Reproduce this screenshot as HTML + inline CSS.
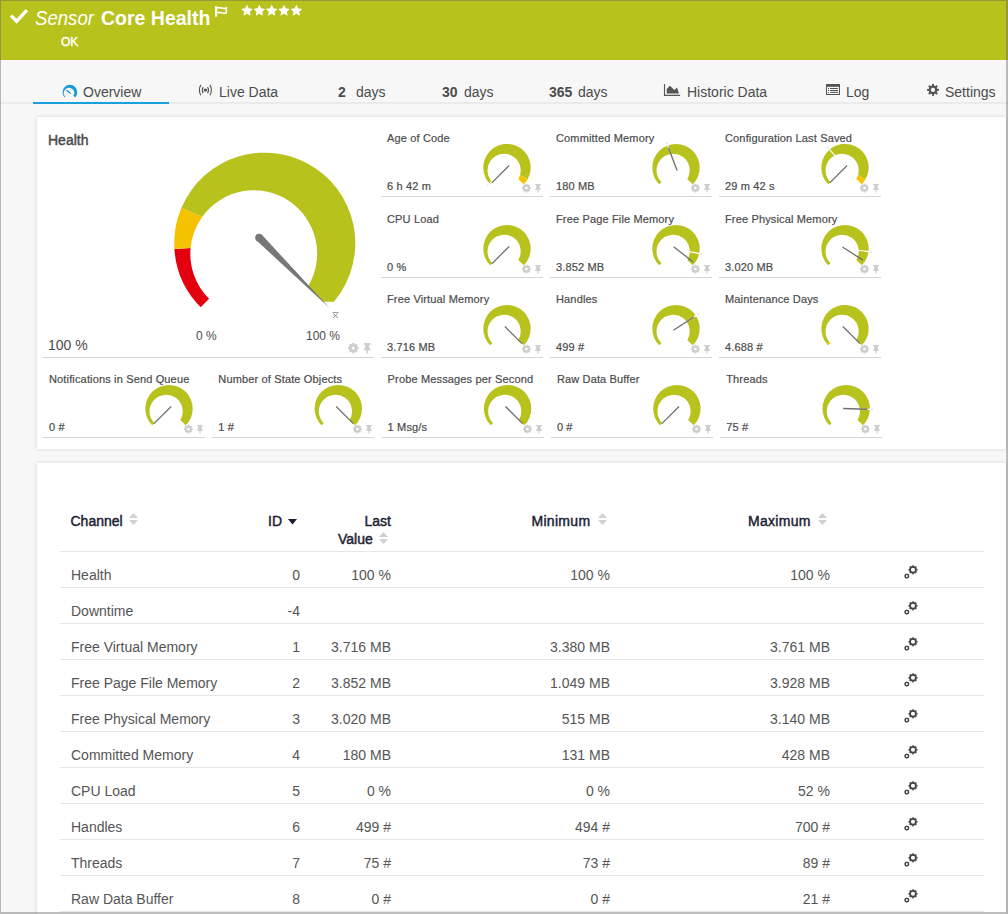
<!DOCTYPE html>
<html><head><meta charset="utf-8"><style>
*{box-sizing:border-box}
html,body{margin:0;padding:0}
body{width:1008px;height:914px;overflow:hidden;position:relative;background:#f7f7f7;font-family:"Liberation Sans",sans-serif;color:#4b4b4b}
.abs{position:absolute}
#hdr{position:absolute;left:0;top:0;width:1008px;height:60px;background:#b7c21c}
#frame{position:absolute;left:0;top:0;width:1008px;height:914px;border-top:1px solid rgba(100,100,100,.42);border-left:1px solid rgba(100,100,100,.42);border-right:2px solid rgba(100,100,100,.42);border-bottom:2px solid rgba(100,100,100,.42);z-index:50;pointer-events:none}
.tab{position:absolute;top:84px;font-size:14px;line-height:16px;color:#4b4b4b;white-space:nowrap}
.tab b{font-weight:bold}
.panel{position:absolute;left:37px;width:969px;background:#fff;box-shadow:0 0 4px rgba(0,0,0,.14)}
.wt{position:absolute;font-size:11px;line-height:12px;letter-spacing:.15px;color:#4b4b4b;-webkit-text-stroke:.2px #4b4b4b;white-space:nowrap}
.wv{position:absolute;font-size:11px;line-height:12px;letter-spacing:.15px;color:#4b4b4b;-webkit-text-stroke:.2px #4b4b4b;white-space:nowrap}
.ul{position:absolute;height:1px;background:#d6d6d6}
.gp{position:absolute}
.tc{position:absolute;font-size:14px;line-height:14px;color:#555;white-space:nowrap}
.th{position:absolute;font-size:14px;line-height:18px;color:#1d1d33;-webkit-text-stroke:.45px #1d1d33;white-space:nowrap}
.tl{position:absolute;left:60px;width:924px;height:1px;background:#e6e6e6}
.act{position:absolute}
.sort{position:absolute}
</style></head><body>
<div id="hdr"></div>
<svg class="abs" style="left:9px;top:8px" width="20" height="16" viewBox="0 0 20 16"><path d="M2 7.6L7.6 13.2L18 2.2" fill="none" stroke="#fff" stroke-width="3.4"/></svg>
<div class="abs" style="left:35px;top:7px;font-size:20px;line-height:22px;color:#fff;font-style:italic;transform:scaleX(.93);transform-origin:0 0;white-space:nowrap">Sensor</div>
<div class="abs" style="left:101px;top:6.5px;font-size:19.5px;line-height:22px;color:#fff;font-weight:bold;white-space:nowrap">Core Health</div>
<svg class="abs" style="left:214px;top:5px" width="16" height="13" viewBox="0 0 16 13"><path d="M2.1 1.2V11.7" stroke="#fff" stroke-width="2.1"/><path d="M2.5 3C5.5 1.4 9 4.6 12.3 3V7.8C9 9.4 5.5 6.2 2.5 7.8" fill="none" stroke="#fff" stroke-width="1.6"/></svg>
<svg class="abs" style="left:241px;top:4px" width="64" height="13" viewBox="0 0 64 13"><g fill="#fff"><path transform="translate(6.00 6.8)" d="M0.00 -6.10L1.76 -2.43L5.80 -1.89L2.85 0.93L3.59 4.94L0.00 3.00L-3.59 4.94L-2.85 0.93L-5.80 -1.89L-1.76 -2.43z"/><path transform="translate(18.35 6.8)" d="M0.00 -6.10L1.76 -2.43L5.80 -1.89L2.85 0.93L3.59 4.94L0.00 3.00L-3.59 4.94L-2.85 0.93L-5.80 -1.89L-1.76 -2.43z"/><path transform="translate(30.70 6.8)" d="M0.00 -6.10L1.76 -2.43L5.80 -1.89L2.85 0.93L3.59 4.94L0.00 3.00L-3.59 4.94L-2.85 0.93L-5.80 -1.89L-1.76 -2.43z"/><path transform="translate(43.05 6.8)" d="M0.00 -6.10L1.76 -2.43L5.80 -1.89L2.85 0.93L3.59 4.94L0.00 3.00L-3.59 4.94L-2.85 0.93L-5.80 -1.89L-1.76 -2.43z"/><path transform="translate(55.40 6.8)" d="M0.00 -6.10L1.76 -2.43L5.80 -1.89L2.85 0.93L3.59 4.94L0.00 3.00L-3.59 4.94L-2.85 0.93L-5.80 -1.89L-1.76 -2.43z"/></g></svg>
<div class="abs" style="left:61px;top:35px;font-size:12px;line-height:14px;color:#fff;-webkit-text-stroke:.4px #fff;white-space:nowrap">OK</div>

<div class="abs" style="left:0;top:102px;width:1008px;height:2px;background:#ebebeb"></div>
<div class="abs" style="left:33px;top:102px;width:136px;height:2px;background:#1ca0dc"></div>
<svg class="abs" style="left:0;top:0" width="100" height="110"><path d="M64.67 97.43A7.4 7.4 0 1 1 75.13 97.43L73.44 95.74A5.18 5.18 0 1 0 65.35 96.75Z" fill="#1a9ad6"/><line x1="66.4" y1="90.3" x2="70.8" y2="93.5" stroke="#1a9ad6" stroke-width="1.3"/></svg>
<div class="tab" style="left:83px">Overview</div>
<svg class="abs" style="left:197px;top:84px" width="17" height="13" viewBox="0 0 17 13"><circle cx="8.4" cy="6.1" r="1.7" fill="#555"/><path d="M6.2 2.9A6.4 6.4 0 0 0 6.2 9.3M10.6 2.9A6.4 6.4 0 0 1 10.6 9.3M3.9 0.9A10.3 10.3 0 0 0 3.9 11.3M12.9 0.9A10.3 10.3 0 0 1 12.9 11.3" fill="none" stroke="#555" stroke-width="1.1"/></svg>
<div class="tab" style="left:219px">Live Data</div>
<div class="tab" style="left:338px"><b>2</b></div><div class="tab" style="left:356px">days</div>
<div class="tab" style="left:442px"><b>30</b></div><div class="tab" style="left:464px">days</div>
<div class="tab" style="left:549px"><b>365</b></div><div class="tab" style="left:578px">days</div>
<svg class="abs" style="left:663px;top:84px" width="18" height="12" viewBox="0 0 18 12"><path d="M1.5 0V11.4H17.1" fill="none" stroke="#555" stroke-width="1.1"/><path d="M3.7 9.6V5L6.9 1.7L11.4 5.9L14.1 3.4L15.9 9.6z" fill="#555"/></svg>
<div class="tab" style="left:687px">Historic Data</div>
<svg class="abs" style="left:826px;top:84px" width="14" height="11" viewBox="0 0 14 11"><rect x="0.5" y="0.5" width="13" height="10" fill="none" stroke="#555" stroke-width="1"/><rect x="0" y="0" width="14" height="2.8" fill="#555"/><path d="M2 4.5H3M4.1 4.5H12M2 6.5H3M4.1 6.5H12M2 8.4H3M4.1 8.4H12" stroke="#555" stroke-width="1"/></svg>
<div class="tab" style="left:846px">Log</div>
<svg class="abs" style="left:926px;top:83px" width="14" height="14" viewBox="0 0 14 14"><g fill="#555"><rect x="6" y="1" width="2" height="2.6" transform="rotate(0 7 6.9)"/><rect x="6" y="1" width="2" height="2.6" transform="rotate(45 7 6.9)"/><rect x="6" y="1" width="2" height="2.6" transform="rotate(90 7 6.9)"/><rect x="6" y="1" width="2" height="2.6" transform="rotate(135 7 6.9)"/><rect x="6" y="1" width="2" height="2.6" transform="rotate(180 7 6.9)"/><rect x="6" y="1" width="2" height="2.6" transform="rotate(225 7 6.9)"/><rect x="6" y="1" width="2" height="2.6" transform="rotate(270 7 6.9)"/><rect x="6" y="1" width="2" height="2.6" transform="rotate(315 7 6.9)"/><circle cx="7" cy="6.9" r="4.3"/></g><circle cx="7" cy="6.9" r="2.1" fill="#f7f7f7"/></svg>
<div class="tab" style="left:945px">Settings</div>

<div class="panel" style="top:117px;height:332px"></div>
<div class="panel" style="top:463px;height:460px"></div>

<div class="abs" style="left:48px;top:132px;font-size:14px;line-height:16px;color:#4b4b4b;-webkit-text-stroke:.45px #4b4b4b">Health</div>
<div class="abs" style="left:48px;top:337px;font-size:14px;line-height:16px;color:#4b4b4b">100 %</div>
<div class="abs" style="left:196px;top:329px;font-size:12px;line-height:14px;color:#4b4b4b">0 %</div>
<div class="abs" style="left:306px;top:329px;font-size:12px;line-height:14px;color:#4b4b4b">100 %</div>
<svg class="abs" style="left:331px;top:311px" width="9" height="8" viewBox="0 0 9 8"><path d="M1.5 1.3H7.5M2.2 2.6L6.8 6.8M6.8 2.6L2.2 6.8" stroke="#7a7a86" stroke-width="0.9"/></svg>
<div class="wt" style="left:387px;top:132px">Age of Code</div><div class="wv" style="left:387px;top:180px">6 h 42 m</div><div class="ul" style="left:381px;top:196px;width:162px"></div><svg class="gp" style="left:522px;top:183px" width="22" height="10" viewBox="0 0 22 10"><g fill="#cdcdcd"><circle cx="4.4" cy="5.1" r="3.5"/><rect x="3.5" y="0.7" width="1.8" height="1.6" transform="rotate(0 4.4 5.1)"/><rect x="3.5" y="0.7" width="1.8" height="1.6" transform="rotate(45 4.4 5.1)"/><rect x="3.5" y="0.7" width="1.8" height="1.6" transform="rotate(90 4.4 5.1)"/><rect x="3.5" y="0.7" width="1.8" height="1.6" transform="rotate(135 4.4 5.1)"/><rect x="3.5" y="0.7" width="1.8" height="1.6" transform="rotate(180 4.4 5.1)"/><rect x="3.5" y="0.7" width="1.8" height="1.6" transform="rotate(225 4.4 5.1)"/><rect x="3.5" y="0.7" width="1.8" height="1.6" transform="rotate(270 4.4 5.1)"/><rect x="3.5" y="0.7" width="1.8" height="1.6" transform="rotate(315 4.4 5.1)"/></g><circle cx="4.4" cy="5.1" r="1.3" fill="#fff"/><path d="M13.2 0.9H18.8V2.2H17.7V4.6L19.2 6.8H12.6L14.3 4.6V2.2H13.2z M15.4 6.8H16.6V9.6H15.4z" fill="#cdcdcd"/></svg><div class="wt" style="left:556px;top:132px">Committed Memory</div><div class="wv" style="left:556px;top:180px">180 MB</div><div class="ul" style="left:550px;top:196px;width:162px"></div><svg class="gp" style="left:691px;top:183px" width="22" height="10" viewBox="0 0 22 10"><g fill="#cdcdcd"><circle cx="4.4" cy="5.1" r="3.5"/><rect x="3.5" y="0.7" width="1.8" height="1.6" transform="rotate(0 4.4 5.1)"/><rect x="3.5" y="0.7" width="1.8" height="1.6" transform="rotate(45 4.4 5.1)"/><rect x="3.5" y="0.7" width="1.8" height="1.6" transform="rotate(90 4.4 5.1)"/><rect x="3.5" y="0.7" width="1.8" height="1.6" transform="rotate(135 4.4 5.1)"/><rect x="3.5" y="0.7" width="1.8" height="1.6" transform="rotate(180 4.4 5.1)"/><rect x="3.5" y="0.7" width="1.8" height="1.6" transform="rotate(225 4.4 5.1)"/><rect x="3.5" y="0.7" width="1.8" height="1.6" transform="rotate(270 4.4 5.1)"/><rect x="3.5" y="0.7" width="1.8" height="1.6" transform="rotate(315 4.4 5.1)"/></g><circle cx="4.4" cy="5.1" r="1.3" fill="#fff"/><path d="M13.2 0.9H18.8V2.2H17.7V4.6L19.2 6.8H12.6L14.3 4.6V2.2H13.2z M15.4 6.8H16.6V9.6H15.4z" fill="#cdcdcd"/></svg><div class="wt" style="left:725px;top:132px">Configuration Last Saved</div><div class="wv" style="left:725px;top:180px">29 m 42 s</div><div class="ul" style="left:719px;top:196px;width:162px"></div><svg class="gp" style="left:860px;top:183px" width="22" height="10" viewBox="0 0 22 10"><g fill="#cdcdcd"><circle cx="4.4" cy="5.1" r="3.5"/><rect x="3.5" y="0.7" width="1.8" height="1.6" transform="rotate(0 4.4 5.1)"/><rect x="3.5" y="0.7" width="1.8" height="1.6" transform="rotate(45 4.4 5.1)"/><rect x="3.5" y="0.7" width="1.8" height="1.6" transform="rotate(90 4.4 5.1)"/><rect x="3.5" y="0.7" width="1.8" height="1.6" transform="rotate(135 4.4 5.1)"/><rect x="3.5" y="0.7" width="1.8" height="1.6" transform="rotate(180 4.4 5.1)"/><rect x="3.5" y="0.7" width="1.8" height="1.6" transform="rotate(225 4.4 5.1)"/><rect x="3.5" y="0.7" width="1.8" height="1.6" transform="rotate(270 4.4 5.1)"/><rect x="3.5" y="0.7" width="1.8" height="1.6" transform="rotate(315 4.4 5.1)"/></g><circle cx="4.4" cy="5.1" r="1.3" fill="#fff"/><path d="M13.2 0.9H18.8V2.2H17.7V4.6L19.2 6.8H12.6L14.3 4.6V2.2H13.2z M15.4 6.8H16.6V9.6H15.4z" fill="#cdcdcd"/></svg><div class="wt" style="left:387px;top:213px">CPU Load</div><div class="wv" style="left:387px;top:261px">0 %</div><div class="ul" style="left:381px;top:277px;width:162px"></div><svg class="gp" style="left:522px;top:264px" width="22" height="10" viewBox="0 0 22 10"><g fill="#cdcdcd"><circle cx="4.4" cy="5.1" r="3.5"/><rect x="3.5" y="0.7" width="1.8" height="1.6" transform="rotate(0 4.4 5.1)"/><rect x="3.5" y="0.7" width="1.8" height="1.6" transform="rotate(45 4.4 5.1)"/><rect x="3.5" y="0.7" width="1.8" height="1.6" transform="rotate(90 4.4 5.1)"/><rect x="3.5" y="0.7" width="1.8" height="1.6" transform="rotate(135 4.4 5.1)"/><rect x="3.5" y="0.7" width="1.8" height="1.6" transform="rotate(180 4.4 5.1)"/><rect x="3.5" y="0.7" width="1.8" height="1.6" transform="rotate(225 4.4 5.1)"/><rect x="3.5" y="0.7" width="1.8" height="1.6" transform="rotate(270 4.4 5.1)"/><rect x="3.5" y="0.7" width="1.8" height="1.6" transform="rotate(315 4.4 5.1)"/></g><circle cx="4.4" cy="5.1" r="1.3" fill="#fff"/><path d="M13.2 0.9H18.8V2.2H17.7V4.6L19.2 6.8H12.6L14.3 4.6V2.2H13.2z M15.4 6.8H16.6V9.6H15.4z" fill="#cdcdcd"/></svg><div class="wt" style="left:556px;top:213px">Free Page File Memory</div><div class="wv" style="left:556px;top:261px">3.852 MB</div><div class="ul" style="left:550px;top:277px;width:162px"></div><svg class="gp" style="left:691px;top:264px" width="22" height="10" viewBox="0 0 22 10"><g fill="#cdcdcd"><circle cx="4.4" cy="5.1" r="3.5"/><rect x="3.5" y="0.7" width="1.8" height="1.6" transform="rotate(0 4.4 5.1)"/><rect x="3.5" y="0.7" width="1.8" height="1.6" transform="rotate(45 4.4 5.1)"/><rect x="3.5" y="0.7" width="1.8" height="1.6" transform="rotate(90 4.4 5.1)"/><rect x="3.5" y="0.7" width="1.8" height="1.6" transform="rotate(135 4.4 5.1)"/><rect x="3.5" y="0.7" width="1.8" height="1.6" transform="rotate(180 4.4 5.1)"/><rect x="3.5" y="0.7" width="1.8" height="1.6" transform="rotate(225 4.4 5.1)"/><rect x="3.5" y="0.7" width="1.8" height="1.6" transform="rotate(270 4.4 5.1)"/><rect x="3.5" y="0.7" width="1.8" height="1.6" transform="rotate(315 4.4 5.1)"/></g><circle cx="4.4" cy="5.1" r="1.3" fill="#fff"/><path d="M13.2 0.9H18.8V2.2H17.7V4.6L19.2 6.8H12.6L14.3 4.6V2.2H13.2z M15.4 6.8H16.6V9.6H15.4z" fill="#cdcdcd"/></svg><div class="wt" style="left:725px;top:213px">Free Physical Memory</div><div class="wv" style="left:725px;top:261px">3.020 MB</div><div class="ul" style="left:719px;top:277px;width:162px"></div><svg class="gp" style="left:860px;top:264px" width="22" height="10" viewBox="0 0 22 10"><g fill="#cdcdcd"><circle cx="4.4" cy="5.1" r="3.5"/><rect x="3.5" y="0.7" width="1.8" height="1.6" transform="rotate(0 4.4 5.1)"/><rect x="3.5" y="0.7" width="1.8" height="1.6" transform="rotate(45 4.4 5.1)"/><rect x="3.5" y="0.7" width="1.8" height="1.6" transform="rotate(90 4.4 5.1)"/><rect x="3.5" y="0.7" width="1.8" height="1.6" transform="rotate(135 4.4 5.1)"/><rect x="3.5" y="0.7" width="1.8" height="1.6" transform="rotate(180 4.4 5.1)"/><rect x="3.5" y="0.7" width="1.8" height="1.6" transform="rotate(225 4.4 5.1)"/><rect x="3.5" y="0.7" width="1.8" height="1.6" transform="rotate(270 4.4 5.1)"/><rect x="3.5" y="0.7" width="1.8" height="1.6" transform="rotate(315 4.4 5.1)"/></g><circle cx="4.4" cy="5.1" r="1.3" fill="#fff"/><path d="M13.2 0.9H18.8V2.2H17.7V4.6L19.2 6.8H12.6L14.3 4.6V2.2H13.2z M15.4 6.8H16.6V9.6H15.4z" fill="#cdcdcd"/></svg><div class="wt" style="left:387px;top:293px">Free Virtual Memory</div><div class="wv" style="left:387px;top:341px">3.716 MB</div><div class="ul" style="left:381px;top:357px;width:162px"></div><svg class="gp" style="left:522px;top:344px" width="22" height="10" viewBox="0 0 22 10"><g fill="#cdcdcd"><circle cx="4.4" cy="5.1" r="3.5"/><rect x="3.5" y="0.7" width="1.8" height="1.6" transform="rotate(0 4.4 5.1)"/><rect x="3.5" y="0.7" width="1.8" height="1.6" transform="rotate(45 4.4 5.1)"/><rect x="3.5" y="0.7" width="1.8" height="1.6" transform="rotate(90 4.4 5.1)"/><rect x="3.5" y="0.7" width="1.8" height="1.6" transform="rotate(135 4.4 5.1)"/><rect x="3.5" y="0.7" width="1.8" height="1.6" transform="rotate(180 4.4 5.1)"/><rect x="3.5" y="0.7" width="1.8" height="1.6" transform="rotate(225 4.4 5.1)"/><rect x="3.5" y="0.7" width="1.8" height="1.6" transform="rotate(270 4.4 5.1)"/><rect x="3.5" y="0.7" width="1.8" height="1.6" transform="rotate(315 4.4 5.1)"/></g><circle cx="4.4" cy="5.1" r="1.3" fill="#fff"/><path d="M13.2 0.9H18.8V2.2H17.7V4.6L19.2 6.8H12.6L14.3 4.6V2.2H13.2z M15.4 6.8H16.6V9.6H15.4z" fill="#cdcdcd"/></svg><div class="wt" style="left:556px;top:293px">Handles</div><div class="wv" style="left:556px;top:341px">499 #</div><div class="ul" style="left:550px;top:357px;width:162px"></div><svg class="gp" style="left:691px;top:344px" width="22" height="10" viewBox="0 0 22 10"><g fill="#cdcdcd"><circle cx="4.4" cy="5.1" r="3.5"/><rect x="3.5" y="0.7" width="1.8" height="1.6" transform="rotate(0 4.4 5.1)"/><rect x="3.5" y="0.7" width="1.8" height="1.6" transform="rotate(45 4.4 5.1)"/><rect x="3.5" y="0.7" width="1.8" height="1.6" transform="rotate(90 4.4 5.1)"/><rect x="3.5" y="0.7" width="1.8" height="1.6" transform="rotate(135 4.4 5.1)"/><rect x="3.5" y="0.7" width="1.8" height="1.6" transform="rotate(180 4.4 5.1)"/><rect x="3.5" y="0.7" width="1.8" height="1.6" transform="rotate(225 4.4 5.1)"/><rect x="3.5" y="0.7" width="1.8" height="1.6" transform="rotate(270 4.4 5.1)"/><rect x="3.5" y="0.7" width="1.8" height="1.6" transform="rotate(315 4.4 5.1)"/></g><circle cx="4.4" cy="5.1" r="1.3" fill="#fff"/><path d="M13.2 0.9H18.8V2.2H17.7V4.6L19.2 6.8H12.6L14.3 4.6V2.2H13.2z M15.4 6.8H16.6V9.6H15.4z" fill="#cdcdcd"/></svg><div class="wt" style="left:725px;top:293px">Maintenance Days</div><div class="wv" style="left:725px;top:341px">4.688 #</div><div class="ul" style="left:719px;top:357px;width:162px"></div><svg class="gp" style="left:860px;top:344px" width="22" height="10" viewBox="0 0 22 10"><g fill="#cdcdcd"><circle cx="4.4" cy="5.1" r="3.5"/><rect x="3.5" y="0.7" width="1.8" height="1.6" transform="rotate(0 4.4 5.1)"/><rect x="3.5" y="0.7" width="1.8" height="1.6" transform="rotate(45 4.4 5.1)"/><rect x="3.5" y="0.7" width="1.8" height="1.6" transform="rotate(90 4.4 5.1)"/><rect x="3.5" y="0.7" width="1.8" height="1.6" transform="rotate(135 4.4 5.1)"/><rect x="3.5" y="0.7" width="1.8" height="1.6" transform="rotate(180 4.4 5.1)"/><rect x="3.5" y="0.7" width="1.8" height="1.6" transform="rotate(225 4.4 5.1)"/><rect x="3.5" y="0.7" width="1.8" height="1.6" transform="rotate(270 4.4 5.1)"/><rect x="3.5" y="0.7" width="1.8" height="1.6" transform="rotate(315 4.4 5.1)"/></g><circle cx="4.4" cy="5.1" r="1.3" fill="#fff"/><path d="M13.2 0.9H18.8V2.2H17.7V4.6L19.2 6.8H12.6L14.3 4.6V2.2H13.2z M15.4 6.8H16.6V9.6H15.4z" fill="#cdcdcd"/></svg><div class="wt" style="left:49.0px;top:373px">Notifications in Send Queue</div><div class="wv" style="left:49.0px;top:421px">0 #</div><div class="ul" style="left:43.0px;top:437px;width:162px"></div><svg class="gp" style="left:184.0px;top:424px" width="22" height="10" viewBox="0 0 22 10"><g fill="#cdcdcd"><circle cx="4.4" cy="5.1" r="3.5"/><rect x="3.5" y="0.7" width="1.8" height="1.6" transform="rotate(0 4.4 5.1)"/><rect x="3.5" y="0.7" width="1.8" height="1.6" transform="rotate(45 4.4 5.1)"/><rect x="3.5" y="0.7" width="1.8" height="1.6" transform="rotate(90 4.4 5.1)"/><rect x="3.5" y="0.7" width="1.8" height="1.6" transform="rotate(135 4.4 5.1)"/><rect x="3.5" y="0.7" width="1.8" height="1.6" transform="rotate(180 4.4 5.1)"/><rect x="3.5" y="0.7" width="1.8" height="1.6" transform="rotate(225 4.4 5.1)"/><rect x="3.5" y="0.7" width="1.8" height="1.6" transform="rotate(270 4.4 5.1)"/><rect x="3.5" y="0.7" width="1.8" height="1.6" transform="rotate(315 4.4 5.1)"/></g><circle cx="4.4" cy="5.1" r="1.3" fill="#fff"/><path d="M13.2 0.9H18.8V2.2H17.7V4.6L19.2 6.8H12.6L14.3 4.6V2.2H13.2z M15.4 6.8H16.6V9.6H15.4z" fill="#cdcdcd"/></svg><div class="wt" style="left:218.3px;top:373px">Number of State Objects</div><div class="wv" style="left:218.3px;top:421px">1 #</div><div class="ul" style="left:212.3px;top:437px;width:162px"></div><svg class="gp" style="left:353.3px;top:424px" width="22" height="10" viewBox="0 0 22 10"><g fill="#cdcdcd"><circle cx="4.4" cy="5.1" r="3.5"/><rect x="3.5" y="0.7" width="1.8" height="1.6" transform="rotate(0 4.4 5.1)"/><rect x="3.5" y="0.7" width="1.8" height="1.6" transform="rotate(45 4.4 5.1)"/><rect x="3.5" y="0.7" width="1.8" height="1.6" transform="rotate(90 4.4 5.1)"/><rect x="3.5" y="0.7" width="1.8" height="1.6" transform="rotate(135 4.4 5.1)"/><rect x="3.5" y="0.7" width="1.8" height="1.6" transform="rotate(180 4.4 5.1)"/><rect x="3.5" y="0.7" width="1.8" height="1.6" transform="rotate(225 4.4 5.1)"/><rect x="3.5" y="0.7" width="1.8" height="1.6" transform="rotate(270 4.4 5.1)"/><rect x="3.5" y="0.7" width="1.8" height="1.6" transform="rotate(315 4.4 5.1)"/></g><circle cx="4.4" cy="5.1" r="1.3" fill="#fff"/><path d="M13.2 0.9H18.8V2.2H17.7V4.6L19.2 6.8H12.6L14.3 4.6V2.2H13.2z M15.4 6.8H16.6V9.6H15.4z" fill="#cdcdcd"/></svg><div class="wt" style="left:387.6px;top:373px">Probe Messages per Second</div><div class="wv" style="left:387.6px;top:421px">1 Msg/s</div><div class="ul" style="left:381.6px;top:437px;width:162px"></div><svg class="gp" style="left:522.6px;top:424px" width="22" height="10" viewBox="0 0 22 10"><g fill="#cdcdcd"><circle cx="4.4" cy="5.1" r="3.5"/><rect x="3.5" y="0.7" width="1.8" height="1.6" transform="rotate(0 4.4 5.1)"/><rect x="3.5" y="0.7" width="1.8" height="1.6" transform="rotate(45 4.4 5.1)"/><rect x="3.5" y="0.7" width="1.8" height="1.6" transform="rotate(90 4.4 5.1)"/><rect x="3.5" y="0.7" width="1.8" height="1.6" transform="rotate(135 4.4 5.1)"/><rect x="3.5" y="0.7" width="1.8" height="1.6" transform="rotate(180 4.4 5.1)"/><rect x="3.5" y="0.7" width="1.8" height="1.6" transform="rotate(225 4.4 5.1)"/><rect x="3.5" y="0.7" width="1.8" height="1.6" transform="rotate(270 4.4 5.1)"/><rect x="3.5" y="0.7" width="1.8" height="1.6" transform="rotate(315 4.4 5.1)"/></g><circle cx="4.4" cy="5.1" r="1.3" fill="#fff"/><path d="M13.2 0.9H18.8V2.2H17.7V4.6L19.2 6.8H12.6L14.3 4.6V2.2H13.2z M15.4 6.8H16.6V9.6H15.4z" fill="#cdcdcd"/></svg><div class="wt" style="left:556.9px;top:373px">Raw Data Buffer</div><div class="wv" style="left:556.9px;top:421px">0 #</div><div class="ul" style="left:550.9px;top:437px;width:162px"></div><svg class="gp" style="left:691.9px;top:424px" width="22" height="10" viewBox="0 0 22 10"><g fill="#cdcdcd"><circle cx="4.4" cy="5.1" r="3.5"/><rect x="3.5" y="0.7" width="1.8" height="1.6" transform="rotate(0 4.4 5.1)"/><rect x="3.5" y="0.7" width="1.8" height="1.6" transform="rotate(45 4.4 5.1)"/><rect x="3.5" y="0.7" width="1.8" height="1.6" transform="rotate(90 4.4 5.1)"/><rect x="3.5" y="0.7" width="1.8" height="1.6" transform="rotate(135 4.4 5.1)"/><rect x="3.5" y="0.7" width="1.8" height="1.6" transform="rotate(180 4.4 5.1)"/><rect x="3.5" y="0.7" width="1.8" height="1.6" transform="rotate(225 4.4 5.1)"/><rect x="3.5" y="0.7" width="1.8" height="1.6" transform="rotate(270 4.4 5.1)"/><rect x="3.5" y="0.7" width="1.8" height="1.6" transform="rotate(315 4.4 5.1)"/></g><circle cx="4.4" cy="5.1" r="1.3" fill="#fff"/><path d="M13.2 0.9H18.8V2.2H17.7V4.6L19.2 6.8H12.6L14.3 4.6V2.2H13.2z M15.4 6.8H16.6V9.6H15.4z" fill="#cdcdcd"/></svg><div class="wt" style="left:726.2px;top:373px">Threads</div><div class="wv" style="left:726.2px;top:421px">75 #</div><div class="ul" style="left:720.2px;top:437px;width:162px"></div><svg class="gp" style="left:861.2px;top:424px" width="22" height="10" viewBox="0 0 22 10"><g fill="#cdcdcd"><circle cx="4.4" cy="5.1" r="3.5"/><rect x="3.5" y="0.7" width="1.8" height="1.6" transform="rotate(0 4.4 5.1)"/><rect x="3.5" y="0.7" width="1.8" height="1.6" transform="rotate(45 4.4 5.1)"/><rect x="3.5" y="0.7" width="1.8" height="1.6" transform="rotate(90 4.4 5.1)"/><rect x="3.5" y="0.7" width="1.8" height="1.6" transform="rotate(135 4.4 5.1)"/><rect x="3.5" y="0.7" width="1.8" height="1.6" transform="rotate(180 4.4 5.1)"/><rect x="3.5" y="0.7" width="1.8" height="1.6" transform="rotate(225 4.4 5.1)"/><rect x="3.5" y="0.7" width="1.8" height="1.6" transform="rotate(270 4.4 5.1)"/><rect x="3.5" y="0.7" width="1.8" height="1.6" transform="rotate(315 4.4 5.1)"/></g><circle cx="4.4" cy="5.1" r="1.3" fill="#fff"/><path d="M13.2 0.9H18.8V2.2H17.7V4.6L19.2 6.8H12.6L14.3 4.6V2.2H13.2z M15.4 6.8H16.6V9.6H15.4z" fill="#cdcdcd"/></svg><div class="ul" style="left:43px;top:357px;width:331px"></div><svg class="gp" style="left:348.2px;top:341.8px" width="26.4" height="12.0" viewBox="0 0 22 10"><g fill="#cdcdcd"><circle cx="4.4" cy="5.1" r="3.5"/><rect x="3.5" y="0.7" width="1.8" height="1.6" transform="rotate(0 4.4 5.1)"/><rect x="3.5" y="0.7" width="1.8" height="1.6" transform="rotate(45 4.4 5.1)"/><rect x="3.5" y="0.7" width="1.8" height="1.6" transform="rotate(90 4.4 5.1)"/><rect x="3.5" y="0.7" width="1.8" height="1.6" transform="rotate(135 4.4 5.1)"/><rect x="3.5" y="0.7" width="1.8" height="1.6" transform="rotate(180 4.4 5.1)"/><rect x="3.5" y="0.7" width="1.8" height="1.6" transform="rotate(225 4.4 5.1)"/><rect x="3.5" y="0.7" width="1.8" height="1.6" transform="rotate(270 4.4 5.1)"/><rect x="3.5" y="0.7" width="1.8" height="1.6" transform="rotate(315 4.4 5.1)"/></g><circle cx="4.4" cy="5.1" r="1.3" fill="#fff"/><path d="M13.2 0.9H18.8V2.2H17.7V4.6L19.2 6.8H12.6L14.3 4.6V2.2H13.2z M15.4 6.8H16.6V9.6H15.4z" fill="#cdcdcd"/></svg>
<svg class="abs" style="left:0;top:0" width="1008" height="914"><path d="M200.72 307.23A90.55 90.55 0 0 1 174.39 249.03L190.58 247.98A63.38 63.38 0 0 0 209.11 298.84Z" fill="#e3000f"/><path d="M174.39 249.03A90.55 90.55 0 0 1 181.42 207.76L202.34 216.66A63.38 63.38 0 0 0 190.58 247.98Z" fill="#f5c200"/><path d="M181.42 207.76A90.55 90.55 0 1 1 328.78 307.23L308.02 286.47A63.38 63.38 0 0 0 202.34 216.66Z" fill="#b7c21c"/><path d="M315 301.8H345V312H315z" fill="#fff"/><path d="M256.34 240.3L329.8 308.25L261.85 234.79Z" fill="#777"/><circle cx="259.09" cy="237.54" r="3.9" fill="#777"/><path d="M490.24 184.36A23.7 23.7 0 1 1 527.6 179.31L520.04 175.01A16.59 16.59 0 1 0 492.44 182.16Z" fill="#b7c21c"/><path d="M527.6 179.31A23.7 23.7 0 0 1 523.76 184.36L518.32 178.92A16.59 16.59 0 0 0 520.04 175.01Z" fill="#f5c200"/><line x1="497.38" y1="176.35" x2="489.25" y2="183.75" stroke="#fff" stroke-width="1.2"/><line x1="488.36" y1="184.56" x2="487.25" y2="185.57" stroke="#c9c9d6" stroke-width="1"/><line x1="509.12" y1="165.48" x2="492.01" y2="182.59" stroke="#6e6e6e" stroke-width="1.3"/><path d="M659.24 184.36A23.7 23.7 0 1 1 692.76 184.36L687.32 178.92A16.59 16.59 0 1 0 661.44 182.16Z" fill="#b7c21c"/><line x1="671.39" y1="155.45" x2="667.48" y2="145.16" stroke="#fff" stroke-width="1.2"/><line x1="667.06" y1="144.04" x2="666.52" y2="142.64" stroke="#c9c9d6" stroke-width="1"/><line x1="677.06" y1="170.4" x2="668.48" y2="147.78" stroke="#6e6e6e" stroke-width="1.3"/><path d="M828.24 184.36A23.7 23.7 0 1 1 865.6 179.31L858.04 175.01A16.59 16.59 0 1 0 830.44 182.16Z" fill="#b7c21c"/><path d="M865.6 179.31A23.7 23.7 0 0 1 861.76 184.36L856.32 178.92A16.59 16.59 0 0 0 858.04 175.01Z" fill="#f5c200"/><line x1="836.56" y1="157.71" x2="829.41" y2="149.35" stroke="#fff" stroke-width="1.2"/><line x1="828.63" y1="148.44" x2="827.66" y2="147.3" stroke="#c9c9d6" stroke-width="1"/><line x1="847.12" y1="165.48" x2="830.01" y2="182.59" stroke="#6e6e6e" stroke-width="1.3"/><path d="M490.24 265.36A23.7 23.7 0 1 1 523.76 265.36L518.32 259.92A16.59 16.59 0 1 0 492.44 263.16Z" fill="#b7c21c"/><line x1="509.12" y1="246.48" x2="492.01" y2="263.59" stroke="#6e6e6e" stroke-width="1.3"/><path d="M659.24 265.36A23.7 23.7 0 1 1 692.76 265.36L687.32 259.92A16.59 16.59 0 1 0 661.44 263.16Z" fill="#b7c21c"/><line x1="688.71" y1="251.32" x2="699.47" y2="253.61" stroke="#fff" stroke-width="1.2"/><line x1="700.64" y1="253.87" x2="702.11" y2="254.18" stroke="#c9c9d6" stroke-width="1"/><line x1="673.64" y1="246.75" x2="692.71" y2="261.65" stroke="#6e6e6e" stroke-width="1.3"/><path d="M828.24 265.36A23.7 23.7 0 1 1 861.76 265.36L856.32 259.92A16.59 16.59 0 1 0 830.44 263.16Z" fill="#b7c21c"/><line x1="857.9" y1="250.23" x2="868.81" y2="251.61" stroke="#fff" stroke-width="1.2"/><line x1="870" y1="251.76" x2="871.49" y2="251.95" stroke="#c9c9d6" stroke-width="1"/><line x1="842.48" y1="246.97" x2="862.81" y2="260.1" stroke="#6e6e6e" stroke-width="1.3"/><path d="M490.24 345.36A23.7 23.7 0 1 1 523.76 345.36L518.32 339.92A16.59 16.59 0 1 0 492.44 343.16Z" fill="#b7c21c"/><line x1="504.88" y1="326.48" x2="521.99" y2="343.59" stroke="#6e6e6e" stroke-width="1.3"/><path d="M659.24 345.36A23.7 23.7 0 1 1 692.76 345.36L687.32 339.92A16.59 16.59 0 1 0 661.44 343.16Z" fill="#b7c21c"/><line x1="686.87" y1="321.46" x2="696.06" y2="315.42" stroke="#fff" stroke-width="1.2"/><line x1="697.06" y1="314.76" x2="698.32" y2="313.94" stroke="#c9c9d6" stroke-width="1"/><line x1="673.49" y1="330.25" x2="693.72" y2="316.96" stroke="#6e6e6e" stroke-width="1.3"/><path d="M828.24 345.36A23.7 23.7 0 0 1 826.74 343.71L829.14 341.72A16.59 16.59 0 0 0 830.44 343.16Z" fill="#f5c200"/><path d="M826.74 343.71A23.7 23.7 0 1 1 861.76 345.36L856.32 339.92A16.59 16.59 0 1 0 829.14 341.72Z" fill="#b7c21c"/><line x1="842.88" y1="326.48" x2="859.99" y2="343.59" stroke="#6e6e6e" stroke-width="1.3"/><path d="M152.24 425.36A23.7 23.7 0 1 1 185.76 425.36L180.32 419.92A16.59 16.59 0 1 0 154.44 423.16Z" fill="#b7c21c"/><line x1="171.12" y1="406.48" x2="154.01" y2="423.59" stroke="#6e6e6e" stroke-width="1.3"/><path d="M321.54 425.36A23.7 23.7 0 1 1 355.06 425.36L349.62 419.92A16.59 16.59 0 1 0 323.74 423.16Z" fill="#b7c21c"/><line x1="336.18" y1="406.48" x2="353.29" y2="423.59" stroke="#6e6e6e" stroke-width="1.3"/><path d="M490.84 425.36A23.7 23.7 0 1 1 524.36 425.36L518.92 419.92A16.59 16.59 0 1 0 493.04 423.16Z" fill="#b7c21c"/><line x1="505.48" y1="406.48" x2="522.59" y2="423.59" stroke="#6e6e6e" stroke-width="1.3"/><path d="M660.14 425.36A23.7 23.7 0 1 1 693.66 425.36L688.22 419.92A16.59 16.59 0 1 0 662.34 423.16Z" fill="#b7c21c"/><line x1="679.02" y1="406.48" x2="661.91" y2="423.59" stroke="#6e6e6e" stroke-width="1.3"/><path d="M829.44 425.36A23.7 23.7 0 1 1 862.96 425.36L857.52 419.92A16.59 16.59 0 1 0 831.64 423.16Z" fill="#b7c21c"/><line x1="859.19" y1="409.01" x2="870.19" y2="409.35" stroke="#fff" stroke-width="1.2"/><line x1="871.39" y1="409.39" x2="872.89" y2="409.44" stroke="#c9c9d6" stroke-width="1"/><line x1="843.2" y1="408.51" x2="867.39" y2="409.27" stroke="#6e6e6e" stroke-width="1.3"/></svg>

<div class="th" style="left:70.5px;top:512px">Channel</div><svg class="sort" style="left:129px;top:513px" width="9" height="12" viewBox="0 0 9 12"><path d="M4.5 0L9 5H0z M0 7H9L4.5 12z" fill="#d0d0d0"/></svg>
<div class="th" style="left:268px;top:512px">ID</div>
<svg class="abs" style="left:288px;top:519px" width="9" height="6" viewBox="0 0 9 6"><path d="M0 0H9L4.5 5.5z" fill="#1d1d33"/></svg>
<div class="th" style="right:617px;top:512px">Last</div>
<div class="th" style="left:338px;top:530px">Value</div><svg class="sort" style="left:379px;top:532px" width="9" height="12" viewBox="0 0 9 12"><path d="M4.5 0L9 5H0z M0 7H9L4.5 12z" fill="#d0d0d0"/></svg>
<div class="th" style="left:531.5px;top:512px;letter-spacing:.3px">Minimum</div><svg class="sort" style="left:598px;top:513px" width="9" height="12" viewBox="0 0 9 12"><path d="M4.5 0L9 5H0z M0 7H9L4.5 12z" fill="#d0d0d0"/></svg>
<div class="th" style="left:748px;top:512px;letter-spacing:.3px">Maximum</div><svg class="sort" style="left:818px;top:513px" width="9" height="12" viewBox="0 0 9 12"><path d="M4.5 0L9 5H0z M0 7H9L4.5 12z" fill="#d0d0d0"/></svg>
<div class="tl" style="top:551px"></div>
<div class="tc" style="left:71px;top:568px">Health</div><div class="tc r" style="right:708px;top:568px">0</div><div class="tc r" style="right:617px;top:568px">100 %</div><div class="tc r" style="right:398px;top:568px">100 %</div><div class="tc r" style="right:178px;top:568px">100 %</div><div class="tl" style="top:587px"></div><svg class="act" style="left:902px;top:562px" width="18" height="18" viewBox="0 0 18 18"><g fill="#444"><rect x="10.3" y="3.2" width="1.4" height="1.4" transform="rotate(0 11 7.8)"/><rect x="10.3" y="3.2" width="1.4" height="1.4" transform="rotate(45 11 7.8)"/><rect x="10.3" y="3.2" width="1.4" height="1.4" transform="rotate(90 11 7.8)"/><rect x="10.3" y="3.2" width="1.4" height="1.4" transform="rotate(135 11 7.8)"/><rect x="10.3" y="3.2" width="1.4" height="1.4" transform="rotate(180 11 7.8)"/><rect x="10.3" y="3.2" width="1.4" height="1.4" transform="rotate(225 11 7.8)"/><rect x="10.3" y="3.2" width="1.4" height="1.4" transform="rotate(270 11 7.8)"/><rect x="10.3" y="3.2" width="1.4" height="1.4" transform="rotate(315 11 7.8)"/><circle cx="11" cy="7.8" r="3.85"/><rect x="4.3" y="11.7" width="1.2" height="1.2" transform="rotate(0 4.8 14.1)"/><rect x="4.3" y="11.7" width="1.2" height="1.2" transform="rotate(45 4.8 14.1)"/><rect x="4.3" y="11.7" width="1.2" height="1.2" transform="rotate(90 4.8 14.1)"/><rect x="4.3" y="11.7" width="1.2" height="1.2" transform="rotate(135 4.8 14.1)"/><rect x="4.3" y="11.7" width="1.2" height="1.2" transform="rotate(180 4.8 14.1)"/><rect x="4.3" y="11.7" width="1.2" height="1.2" transform="rotate(225 4.8 14.1)"/><rect x="4.3" y="11.7" width="1.2" height="1.2" transform="rotate(270 4.8 14.1)"/><rect x="4.3" y="11.7" width="1.2" height="1.2" transform="rotate(315 4.8 14.1)"/><circle cx="4.8" cy="14.1" r="2.35"/></g><circle cx="11" cy="7.8" r="2.05" fill="#fff"/><circle cx="4.8" cy="14.1" r="1.05" fill="#fff"/></svg><div class="tc" style="left:71px;top:604px">Downtime</div><div class="tc r" style="right:708px;top:604px">-4</div><div class="tc r" style="right:617px;top:604px"></div><div class="tc r" style="right:398px;top:604px"></div><div class="tc r" style="right:178px;top:604px"></div><div class="tl" style="top:623px"></div><svg class="act" style="left:902px;top:598px" width="18" height="18" viewBox="0 0 18 18"><g fill="#444"><rect x="10.3" y="3.2" width="1.4" height="1.4" transform="rotate(0 11 7.8)"/><rect x="10.3" y="3.2" width="1.4" height="1.4" transform="rotate(45 11 7.8)"/><rect x="10.3" y="3.2" width="1.4" height="1.4" transform="rotate(90 11 7.8)"/><rect x="10.3" y="3.2" width="1.4" height="1.4" transform="rotate(135 11 7.8)"/><rect x="10.3" y="3.2" width="1.4" height="1.4" transform="rotate(180 11 7.8)"/><rect x="10.3" y="3.2" width="1.4" height="1.4" transform="rotate(225 11 7.8)"/><rect x="10.3" y="3.2" width="1.4" height="1.4" transform="rotate(270 11 7.8)"/><rect x="10.3" y="3.2" width="1.4" height="1.4" transform="rotate(315 11 7.8)"/><circle cx="11" cy="7.8" r="3.85"/><rect x="4.3" y="11.7" width="1.2" height="1.2" transform="rotate(0 4.8 14.1)"/><rect x="4.3" y="11.7" width="1.2" height="1.2" transform="rotate(45 4.8 14.1)"/><rect x="4.3" y="11.7" width="1.2" height="1.2" transform="rotate(90 4.8 14.1)"/><rect x="4.3" y="11.7" width="1.2" height="1.2" transform="rotate(135 4.8 14.1)"/><rect x="4.3" y="11.7" width="1.2" height="1.2" transform="rotate(180 4.8 14.1)"/><rect x="4.3" y="11.7" width="1.2" height="1.2" transform="rotate(225 4.8 14.1)"/><rect x="4.3" y="11.7" width="1.2" height="1.2" transform="rotate(270 4.8 14.1)"/><rect x="4.3" y="11.7" width="1.2" height="1.2" transform="rotate(315 4.8 14.1)"/><circle cx="4.8" cy="14.1" r="2.35"/></g><circle cx="11" cy="7.8" r="2.05" fill="#fff"/><circle cx="4.8" cy="14.1" r="1.05" fill="#fff"/></svg><div class="tc" style="left:71px;top:640px">Free Virtual Memory</div><div class="tc r" style="right:708px;top:640px">1</div><div class="tc r" style="right:617px;top:640px">3.716 MB</div><div class="tc r" style="right:398px;top:640px">3.380 MB</div><div class="tc r" style="right:178px;top:640px">3.761 MB</div><div class="tl" style="top:659px"></div><svg class="act" style="left:902px;top:634px" width="18" height="18" viewBox="0 0 18 18"><g fill="#444"><rect x="10.3" y="3.2" width="1.4" height="1.4" transform="rotate(0 11 7.8)"/><rect x="10.3" y="3.2" width="1.4" height="1.4" transform="rotate(45 11 7.8)"/><rect x="10.3" y="3.2" width="1.4" height="1.4" transform="rotate(90 11 7.8)"/><rect x="10.3" y="3.2" width="1.4" height="1.4" transform="rotate(135 11 7.8)"/><rect x="10.3" y="3.2" width="1.4" height="1.4" transform="rotate(180 11 7.8)"/><rect x="10.3" y="3.2" width="1.4" height="1.4" transform="rotate(225 11 7.8)"/><rect x="10.3" y="3.2" width="1.4" height="1.4" transform="rotate(270 11 7.8)"/><rect x="10.3" y="3.2" width="1.4" height="1.4" transform="rotate(315 11 7.8)"/><circle cx="11" cy="7.8" r="3.85"/><rect x="4.3" y="11.7" width="1.2" height="1.2" transform="rotate(0 4.8 14.1)"/><rect x="4.3" y="11.7" width="1.2" height="1.2" transform="rotate(45 4.8 14.1)"/><rect x="4.3" y="11.7" width="1.2" height="1.2" transform="rotate(90 4.8 14.1)"/><rect x="4.3" y="11.7" width="1.2" height="1.2" transform="rotate(135 4.8 14.1)"/><rect x="4.3" y="11.7" width="1.2" height="1.2" transform="rotate(180 4.8 14.1)"/><rect x="4.3" y="11.7" width="1.2" height="1.2" transform="rotate(225 4.8 14.1)"/><rect x="4.3" y="11.7" width="1.2" height="1.2" transform="rotate(270 4.8 14.1)"/><rect x="4.3" y="11.7" width="1.2" height="1.2" transform="rotate(315 4.8 14.1)"/><circle cx="4.8" cy="14.1" r="2.35"/></g><circle cx="11" cy="7.8" r="2.05" fill="#fff"/><circle cx="4.8" cy="14.1" r="1.05" fill="#fff"/></svg><div class="tc" style="left:71px;top:676px">Free Page File Memory</div><div class="tc r" style="right:708px;top:676px">2</div><div class="tc r" style="right:617px;top:676px">3.852 MB</div><div class="tc r" style="right:398px;top:676px">1.049 MB</div><div class="tc r" style="right:178px;top:676px">3.928 MB</div><div class="tl" style="top:695px"></div><svg class="act" style="left:902px;top:670px" width="18" height="18" viewBox="0 0 18 18"><g fill="#444"><rect x="10.3" y="3.2" width="1.4" height="1.4" transform="rotate(0 11 7.8)"/><rect x="10.3" y="3.2" width="1.4" height="1.4" transform="rotate(45 11 7.8)"/><rect x="10.3" y="3.2" width="1.4" height="1.4" transform="rotate(90 11 7.8)"/><rect x="10.3" y="3.2" width="1.4" height="1.4" transform="rotate(135 11 7.8)"/><rect x="10.3" y="3.2" width="1.4" height="1.4" transform="rotate(180 11 7.8)"/><rect x="10.3" y="3.2" width="1.4" height="1.4" transform="rotate(225 11 7.8)"/><rect x="10.3" y="3.2" width="1.4" height="1.4" transform="rotate(270 11 7.8)"/><rect x="10.3" y="3.2" width="1.4" height="1.4" transform="rotate(315 11 7.8)"/><circle cx="11" cy="7.8" r="3.85"/><rect x="4.3" y="11.7" width="1.2" height="1.2" transform="rotate(0 4.8 14.1)"/><rect x="4.3" y="11.7" width="1.2" height="1.2" transform="rotate(45 4.8 14.1)"/><rect x="4.3" y="11.7" width="1.2" height="1.2" transform="rotate(90 4.8 14.1)"/><rect x="4.3" y="11.7" width="1.2" height="1.2" transform="rotate(135 4.8 14.1)"/><rect x="4.3" y="11.7" width="1.2" height="1.2" transform="rotate(180 4.8 14.1)"/><rect x="4.3" y="11.7" width="1.2" height="1.2" transform="rotate(225 4.8 14.1)"/><rect x="4.3" y="11.7" width="1.2" height="1.2" transform="rotate(270 4.8 14.1)"/><rect x="4.3" y="11.7" width="1.2" height="1.2" transform="rotate(315 4.8 14.1)"/><circle cx="4.8" cy="14.1" r="2.35"/></g><circle cx="11" cy="7.8" r="2.05" fill="#fff"/><circle cx="4.8" cy="14.1" r="1.05" fill="#fff"/></svg><div class="tc" style="left:71px;top:712px">Free Physical Memory</div><div class="tc r" style="right:708px;top:712px">3</div><div class="tc r" style="right:617px;top:712px">3.020 MB</div><div class="tc r" style="right:398px;top:712px">515 MB</div><div class="tc r" style="right:178px;top:712px">3.140 MB</div><div class="tl" style="top:731px"></div><svg class="act" style="left:902px;top:706px" width="18" height="18" viewBox="0 0 18 18"><g fill="#444"><rect x="10.3" y="3.2" width="1.4" height="1.4" transform="rotate(0 11 7.8)"/><rect x="10.3" y="3.2" width="1.4" height="1.4" transform="rotate(45 11 7.8)"/><rect x="10.3" y="3.2" width="1.4" height="1.4" transform="rotate(90 11 7.8)"/><rect x="10.3" y="3.2" width="1.4" height="1.4" transform="rotate(135 11 7.8)"/><rect x="10.3" y="3.2" width="1.4" height="1.4" transform="rotate(180 11 7.8)"/><rect x="10.3" y="3.2" width="1.4" height="1.4" transform="rotate(225 11 7.8)"/><rect x="10.3" y="3.2" width="1.4" height="1.4" transform="rotate(270 11 7.8)"/><rect x="10.3" y="3.2" width="1.4" height="1.4" transform="rotate(315 11 7.8)"/><circle cx="11" cy="7.8" r="3.85"/><rect x="4.3" y="11.7" width="1.2" height="1.2" transform="rotate(0 4.8 14.1)"/><rect x="4.3" y="11.7" width="1.2" height="1.2" transform="rotate(45 4.8 14.1)"/><rect x="4.3" y="11.7" width="1.2" height="1.2" transform="rotate(90 4.8 14.1)"/><rect x="4.3" y="11.7" width="1.2" height="1.2" transform="rotate(135 4.8 14.1)"/><rect x="4.3" y="11.7" width="1.2" height="1.2" transform="rotate(180 4.8 14.1)"/><rect x="4.3" y="11.7" width="1.2" height="1.2" transform="rotate(225 4.8 14.1)"/><rect x="4.3" y="11.7" width="1.2" height="1.2" transform="rotate(270 4.8 14.1)"/><rect x="4.3" y="11.7" width="1.2" height="1.2" transform="rotate(315 4.8 14.1)"/><circle cx="4.8" cy="14.1" r="2.35"/></g><circle cx="11" cy="7.8" r="2.05" fill="#fff"/><circle cx="4.8" cy="14.1" r="1.05" fill="#fff"/></svg><div class="tc" style="left:71px;top:748px">Committed Memory</div><div class="tc r" style="right:708px;top:748px">4</div><div class="tc r" style="right:617px;top:748px">180 MB</div><div class="tc r" style="right:398px;top:748px">131 MB</div><div class="tc r" style="right:178px;top:748px">428 MB</div><div class="tl" style="top:767px"></div><svg class="act" style="left:902px;top:742px" width="18" height="18" viewBox="0 0 18 18"><g fill="#444"><rect x="10.3" y="3.2" width="1.4" height="1.4" transform="rotate(0 11 7.8)"/><rect x="10.3" y="3.2" width="1.4" height="1.4" transform="rotate(45 11 7.8)"/><rect x="10.3" y="3.2" width="1.4" height="1.4" transform="rotate(90 11 7.8)"/><rect x="10.3" y="3.2" width="1.4" height="1.4" transform="rotate(135 11 7.8)"/><rect x="10.3" y="3.2" width="1.4" height="1.4" transform="rotate(180 11 7.8)"/><rect x="10.3" y="3.2" width="1.4" height="1.4" transform="rotate(225 11 7.8)"/><rect x="10.3" y="3.2" width="1.4" height="1.4" transform="rotate(270 11 7.8)"/><rect x="10.3" y="3.2" width="1.4" height="1.4" transform="rotate(315 11 7.8)"/><circle cx="11" cy="7.8" r="3.85"/><rect x="4.3" y="11.7" width="1.2" height="1.2" transform="rotate(0 4.8 14.1)"/><rect x="4.3" y="11.7" width="1.2" height="1.2" transform="rotate(45 4.8 14.1)"/><rect x="4.3" y="11.7" width="1.2" height="1.2" transform="rotate(90 4.8 14.1)"/><rect x="4.3" y="11.7" width="1.2" height="1.2" transform="rotate(135 4.8 14.1)"/><rect x="4.3" y="11.7" width="1.2" height="1.2" transform="rotate(180 4.8 14.1)"/><rect x="4.3" y="11.7" width="1.2" height="1.2" transform="rotate(225 4.8 14.1)"/><rect x="4.3" y="11.7" width="1.2" height="1.2" transform="rotate(270 4.8 14.1)"/><rect x="4.3" y="11.7" width="1.2" height="1.2" transform="rotate(315 4.8 14.1)"/><circle cx="4.8" cy="14.1" r="2.35"/></g><circle cx="11" cy="7.8" r="2.05" fill="#fff"/><circle cx="4.8" cy="14.1" r="1.05" fill="#fff"/></svg><div class="tc" style="left:71px;top:784px">CPU Load</div><div class="tc r" style="right:708px;top:784px">5</div><div class="tc r" style="right:617px;top:784px">0 %</div><div class="tc r" style="right:398px;top:784px">0 %</div><div class="tc r" style="right:178px;top:784px">52 %</div><div class="tl" style="top:803px"></div><svg class="act" style="left:902px;top:778px" width="18" height="18" viewBox="0 0 18 18"><g fill="#444"><rect x="10.3" y="3.2" width="1.4" height="1.4" transform="rotate(0 11 7.8)"/><rect x="10.3" y="3.2" width="1.4" height="1.4" transform="rotate(45 11 7.8)"/><rect x="10.3" y="3.2" width="1.4" height="1.4" transform="rotate(90 11 7.8)"/><rect x="10.3" y="3.2" width="1.4" height="1.4" transform="rotate(135 11 7.8)"/><rect x="10.3" y="3.2" width="1.4" height="1.4" transform="rotate(180 11 7.8)"/><rect x="10.3" y="3.2" width="1.4" height="1.4" transform="rotate(225 11 7.8)"/><rect x="10.3" y="3.2" width="1.4" height="1.4" transform="rotate(270 11 7.8)"/><rect x="10.3" y="3.2" width="1.4" height="1.4" transform="rotate(315 11 7.8)"/><circle cx="11" cy="7.8" r="3.85"/><rect x="4.3" y="11.7" width="1.2" height="1.2" transform="rotate(0 4.8 14.1)"/><rect x="4.3" y="11.7" width="1.2" height="1.2" transform="rotate(45 4.8 14.1)"/><rect x="4.3" y="11.7" width="1.2" height="1.2" transform="rotate(90 4.8 14.1)"/><rect x="4.3" y="11.7" width="1.2" height="1.2" transform="rotate(135 4.8 14.1)"/><rect x="4.3" y="11.7" width="1.2" height="1.2" transform="rotate(180 4.8 14.1)"/><rect x="4.3" y="11.7" width="1.2" height="1.2" transform="rotate(225 4.8 14.1)"/><rect x="4.3" y="11.7" width="1.2" height="1.2" transform="rotate(270 4.8 14.1)"/><rect x="4.3" y="11.7" width="1.2" height="1.2" transform="rotate(315 4.8 14.1)"/><circle cx="4.8" cy="14.1" r="2.35"/></g><circle cx="11" cy="7.8" r="2.05" fill="#fff"/><circle cx="4.8" cy="14.1" r="1.05" fill="#fff"/></svg><div class="tc" style="left:71px;top:820px">Handles</div><div class="tc r" style="right:708px;top:820px">6</div><div class="tc r" style="right:617px;top:820px">499 #</div><div class="tc r" style="right:398px;top:820px">494 #</div><div class="tc r" style="right:178px;top:820px">700 #</div><div class="tl" style="top:839px"></div><svg class="act" style="left:902px;top:814px" width="18" height="18" viewBox="0 0 18 18"><g fill="#444"><rect x="10.3" y="3.2" width="1.4" height="1.4" transform="rotate(0 11 7.8)"/><rect x="10.3" y="3.2" width="1.4" height="1.4" transform="rotate(45 11 7.8)"/><rect x="10.3" y="3.2" width="1.4" height="1.4" transform="rotate(90 11 7.8)"/><rect x="10.3" y="3.2" width="1.4" height="1.4" transform="rotate(135 11 7.8)"/><rect x="10.3" y="3.2" width="1.4" height="1.4" transform="rotate(180 11 7.8)"/><rect x="10.3" y="3.2" width="1.4" height="1.4" transform="rotate(225 11 7.8)"/><rect x="10.3" y="3.2" width="1.4" height="1.4" transform="rotate(270 11 7.8)"/><rect x="10.3" y="3.2" width="1.4" height="1.4" transform="rotate(315 11 7.8)"/><circle cx="11" cy="7.8" r="3.85"/><rect x="4.3" y="11.7" width="1.2" height="1.2" transform="rotate(0 4.8 14.1)"/><rect x="4.3" y="11.7" width="1.2" height="1.2" transform="rotate(45 4.8 14.1)"/><rect x="4.3" y="11.7" width="1.2" height="1.2" transform="rotate(90 4.8 14.1)"/><rect x="4.3" y="11.7" width="1.2" height="1.2" transform="rotate(135 4.8 14.1)"/><rect x="4.3" y="11.7" width="1.2" height="1.2" transform="rotate(180 4.8 14.1)"/><rect x="4.3" y="11.7" width="1.2" height="1.2" transform="rotate(225 4.8 14.1)"/><rect x="4.3" y="11.7" width="1.2" height="1.2" transform="rotate(270 4.8 14.1)"/><rect x="4.3" y="11.7" width="1.2" height="1.2" transform="rotate(315 4.8 14.1)"/><circle cx="4.8" cy="14.1" r="2.35"/></g><circle cx="11" cy="7.8" r="2.05" fill="#fff"/><circle cx="4.8" cy="14.1" r="1.05" fill="#fff"/></svg><div class="tc" style="left:71px;top:856px">Threads</div><div class="tc r" style="right:708px;top:856px">7</div><div class="tc r" style="right:617px;top:856px">75 #</div><div class="tc r" style="right:398px;top:856px">73 #</div><div class="tc r" style="right:178px;top:856px">89 #</div><div class="tl" style="top:875px"></div><svg class="act" style="left:902px;top:850px" width="18" height="18" viewBox="0 0 18 18"><g fill="#444"><rect x="10.3" y="3.2" width="1.4" height="1.4" transform="rotate(0 11 7.8)"/><rect x="10.3" y="3.2" width="1.4" height="1.4" transform="rotate(45 11 7.8)"/><rect x="10.3" y="3.2" width="1.4" height="1.4" transform="rotate(90 11 7.8)"/><rect x="10.3" y="3.2" width="1.4" height="1.4" transform="rotate(135 11 7.8)"/><rect x="10.3" y="3.2" width="1.4" height="1.4" transform="rotate(180 11 7.8)"/><rect x="10.3" y="3.2" width="1.4" height="1.4" transform="rotate(225 11 7.8)"/><rect x="10.3" y="3.2" width="1.4" height="1.4" transform="rotate(270 11 7.8)"/><rect x="10.3" y="3.2" width="1.4" height="1.4" transform="rotate(315 11 7.8)"/><circle cx="11" cy="7.8" r="3.85"/><rect x="4.3" y="11.7" width="1.2" height="1.2" transform="rotate(0 4.8 14.1)"/><rect x="4.3" y="11.7" width="1.2" height="1.2" transform="rotate(45 4.8 14.1)"/><rect x="4.3" y="11.7" width="1.2" height="1.2" transform="rotate(90 4.8 14.1)"/><rect x="4.3" y="11.7" width="1.2" height="1.2" transform="rotate(135 4.8 14.1)"/><rect x="4.3" y="11.7" width="1.2" height="1.2" transform="rotate(180 4.8 14.1)"/><rect x="4.3" y="11.7" width="1.2" height="1.2" transform="rotate(225 4.8 14.1)"/><rect x="4.3" y="11.7" width="1.2" height="1.2" transform="rotate(270 4.8 14.1)"/><rect x="4.3" y="11.7" width="1.2" height="1.2" transform="rotate(315 4.8 14.1)"/><circle cx="4.8" cy="14.1" r="2.35"/></g><circle cx="11" cy="7.8" r="2.05" fill="#fff"/><circle cx="4.8" cy="14.1" r="1.05" fill="#fff"/></svg><div class="tc" style="left:71px;top:892px">Raw Data Buffer</div><div class="tc r" style="right:708px;top:892px">8</div><div class="tc r" style="right:617px;top:892px">0 #</div><div class="tc r" style="right:398px;top:892px">0 #</div><div class="tc r" style="right:178px;top:892px">21 #</div><div class="tl" style="top:911px"></div><svg class="act" style="left:902px;top:886px" width="18" height="18" viewBox="0 0 18 18"><g fill="#444"><rect x="10.3" y="3.2" width="1.4" height="1.4" transform="rotate(0 11 7.8)"/><rect x="10.3" y="3.2" width="1.4" height="1.4" transform="rotate(45 11 7.8)"/><rect x="10.3" y="3.2" width="1.4" height="1.4" transform="rotate(90 11 7.8)"/><rect x="10.3" y="3.2" width="1.4" height="1.4" transform="rotate(135 11 7.8)"/><rect x="10.3" y="3.2" width="1.4" height="1.4" transform="rotate(180 11 7.8)"/><rect x="10.3" y="3.2" width="1.4" height="1.4" transform="rotate(225 11 7.8)"/><rect x="10.3" y="3.2" width="1.4" height="1.4" transform="rotate(270 11 7.8)"/><rect x="10.3" y="3.2" width="1.4" height="1.4" transform="rotate(315 11 7.8)"/><circle cx="11" cy="7.8" r="3.85"/><rect x="4.3" y="11.7" width="1.2" height="1.2" transform="rotate(0 4.8 14.1)"/><rect x="4.3" y="11.7" width="1.2" height="1.2" transform="rotate(45 4.8 14.1)"/><rect x="4.3" y="11.7" width="1.2" height="1.2" transform="rotate(90 4.8 14.1)"/><rect x="4.3" y="11.7" width="1.2" height="1.2" transform="rotate(135 4.8 14.1)"/><rect x="4.3" y="11.7" width="1.2" height="1.2" transform="rotate(180 4.8 14.1)"/><rect x="4.3" y="11.7" width="1.2" height="1.2" transform="rotate(225 4.8 14.1)"/><rect x="4.3" y="11.7" width="1.2" height="1.2" transform="rotate(270 4.8 14.1)"/><rect x="4.3" y="11.7" width="1.2" height="1.2" transform="rotate(315 4.8 14.1)"/><circle cx="4.8" cy="14.1" r="2.35"/></g><circle cx="11" cy="7.8" r="2.05" fill="#fff"/><circle cx="4.8" cy="14.1" r="1.05" fill="#fff"/></svg>
<div id="frame"></div>
</body></html>
